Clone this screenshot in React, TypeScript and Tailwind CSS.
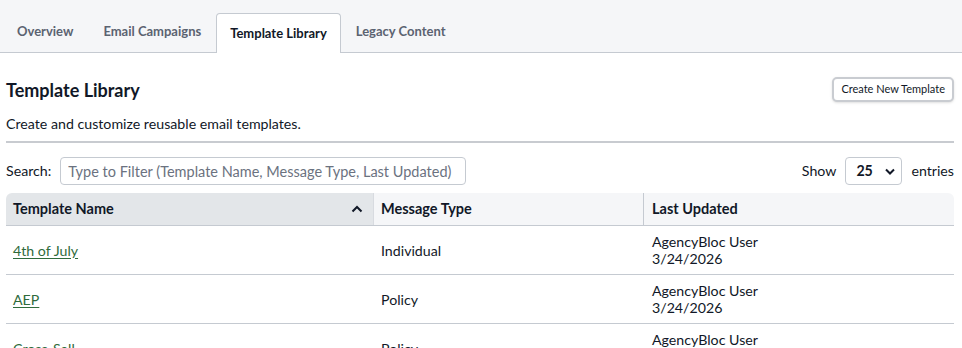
import React from 'react';

const tabs = ['Overview', 'Email Campaigns', 'Template Library', 'Legacy Content'];

const rows = [
  { name: '4th of July', type: 'Individual', user: 'AgencyBloc User', date: '3/24/2026' },
  { name: 'AEP', type: 'Policy', user: 'AgencyBloc User', date: '3/24/2026' },
  { name: 'Cross-Sell', type: 'Policy', user: 'AgencyBloc User', date: '3/24/2026' },
];

export default function App() {
  return (
    <div className="min-h-screen bg-white text-[#111827]" style={{ fontFamily: 'Lato, "Noto Sans", sans-serif' }}>
      {/* Tabs */}
      <div className="h-[53px] bg-[#f5f6f8] border-b border-[#c5cad1] flex items-end pl-[2px]">
        {tabs.map((t) => {
          const active = t === 'Template Library';
          return active ? (
            <div
              key={t}
              className="h-[40px] -mb-px px-[13px] flex items-center bg-white border border-b-0 border-[#c5cad1] rounded-t-[4px] text-[13px] font-bold text-[#111827]"
            >
              {t}
            </div>
          ) : (
            <div key={t} className="h-[40px] px-[15px] flex items-center text-[13px] font-bold text-[#5b6371]">
              {t}
            </div>
          );
        })}
      </div>

      <div className="px-[6px] pr-[8px]">
        {/* Header */}
        <div className="flex items-start justify-between pt-[24px]">
          <h1 className="text-[18px] font-bold leading-[24px] pt-[1px]">Template Library</h1>
          <button className="h-[25px] px-[7px] text-[11px] text-[#111827] bg-white border-2 border-[#c9ccd1] rounded-[5px] shadow-sm">
            Create New Template
          </button>
        </div>
        <p className="mt-[12px] text-[14.2px] leading-[20px]">Create and customize reusable email templates.</p>
        <div className="mt-[7px] h-[2px] bg-[#c8cbd0]" />

        {/* Controls */}
        <div className="mt-[14px] flex items-center justify-between">
          <div className="flex items-center gap-[9px] text-[14.2px]">
            <span>Search:</span>
            <input
              className="w-[406px] h-[28px] px-[7px] border border-[#c5cad1] rounded-[4px] text-[14.5px] placeholder:text-[#6b7280] outline-none"
              placeholder="Type to Filter (Template Name, Message Type, Last Updated)"
            />
          </div>
          <div className="flex items-center gap-[9px] text-[14.2px]">
            <span>Show</span>
            <div className="w-[57px] h-[28px] border border-[#c5cad1] rounded-[4px] flex items-center justify-between pl-[10px] pr-[6px]">
              <span className="font-bold">25</span>
              <svg width="10" height="7" viewBox="0 0 10 7">
                <path d="M1 1.5 L5 5.5 L9 1.5" fill="none" stroke="#111827" strokeWidth="2" />
              </svg>
            </div>
            <span>entries</span>
          </div>
        </div>

        {/* Table */}
        <div className="mt-[8px]">
          <div className="grid grid-cols-[368px_270px_1fr] h-[33px] border-b border-[#c5cad1] text-[14.5px] font-bold">
            <div className="bg-[#e3e6e9] rounded-tl-[6px] flex items-center justify-between pl-[7px] pr-[10px] border-r border-[#d8dbe0]">
              <span>Template Name</span>
              <svg width="12" height="8" viewBox="0 0 12 8">
                <path d="M1.5 6.5 L6 2 L10.5 6.5" fill="none" stroke="#111827" strokeWidth="2" />
              </svg>
            </div>
            <div className="bg-[#f5f6f8] flex items-center pl-[7px] border-r border-[#c5cad1]">Message Type</div>
            <div className="bg-[#f5f6f8] rounded-tr-[6px] flex items-center pl-[8px]">Last Updated</div>
          </div>
          {rows.map((r) => (
            <div key={r.name} className="grid grid-cols-[368px_270px_1fr] h-[49px] border-b border-[#c5cad1] text-[14.2px] leading-[17px]">
              <div className="flex items-center pl-[7px]">
                <a href="#" className="text-[#2f6b3c] underline underline-offset-2">{r.name}</a>
              </div>
              <div className="flex items-center pl-[7px]">{r.type}</div>
              <div className="flex flex-col justify-center pl-[8px]">
                <span>{r.user}</span>
                <span>{r.date}</span>
              </div>
            </div>
          ))}
        </div>
      </div>
    </div>
  );
}
